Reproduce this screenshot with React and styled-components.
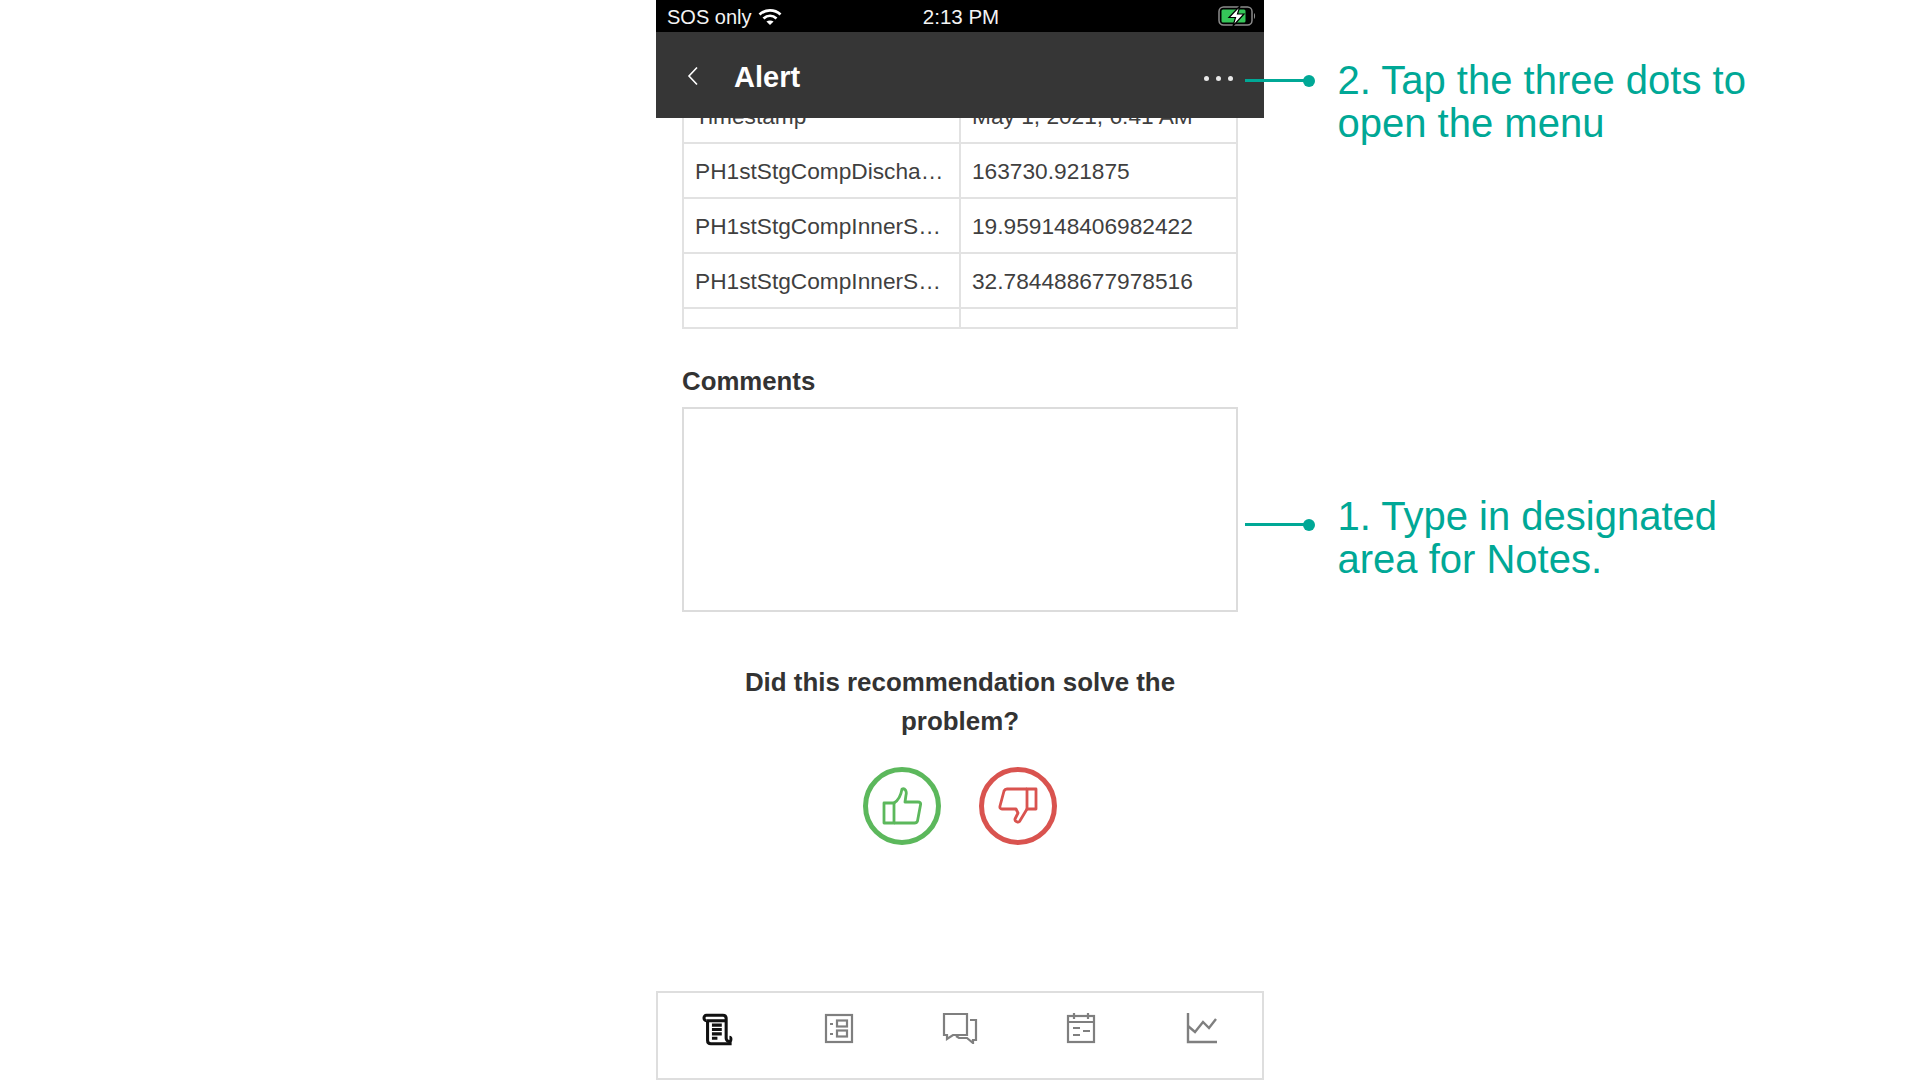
import React from "react";
import styled, { createGlobalStyle } from "styled-components";

const Global = createGlobalStyle`
  html, body { margin: 0; padding: 0; background: #fff; }
  body { font-family: "Liberation Sans", Arial, sans-serif; color: #333; }
  * { box-sizing: border-box; }
`;

const Page = styled.div`
  position: relative;
  width: 1920px;
  height: 1080px;
  overflow: hidden;
  display: flex;
  justify-content: center;
`;
const Phone = styled.div`
  width: 608px;
  height: 1080px;
  display: flex;
  flex-direction: column;
`;
const StatusBar = styled.div`
  height: 32px;
  flex: none;
  background: #000;
  color: #f4f4f4;
  font-size: 20px;
  display: grid;
  grid-template-columns: 1fr auto 1fr;
  align-items: center;
  padding: 2px 8px 0 11px;
`;
const StatusLeft = styled.div`
  display: flex;
  align-items: center;
  gap: 7px;
`;
const StatusRight = styled.div`
  display: flex;
  justify-content: flex-end;
  margin-top: -2px;
`;
const Time = styled.div`
  font-size: 20.5px;
  margin-right: 1px;
`;
const Header = styled.header`
  height: 86px;
  flex: none;
  background: #363636;
  color: #fff;
  display: flex;
  align-items: center;
  padding: 2px 31px 0 31px;
`;
const Title = styled.h1`
  margin: 3px 0 0 35px;
  font-size: 29px;
  font-weight: 700;
  flex: 1;
`;
const Dots = styled.div`
  display: flex;
  gap: 7px;
  margin-top: 4px;
`;
const Dot = styled.span`
  width: 5px;
  height: 5px;
  border-radius: 50%;
  background: #e8e8e8;
`;
const Content = styled.main`
  flex: 1;
  min-height: 0;
  overflow: hidden;
  padding: 0 26px;
  display: flex;
  flex-direction: column;
`;
const Table = styled.table`
  margin-top: -31px;
  width: 556px;
  flex: none;
  table-layout: fixed;
  border-collapse: collapse;
  border: 2px solid #e2e2e2;
  font-size: 22.7px;
`;
const Cell = styled.td`
  height: ${(props) => (props.$short ? "20px" : "55px")};
  border: 2px solid #e2e2e2;
  padding: ${(props) => (props.$short ? "0 0 0 11px" : "2px 0 0 11px")};
  white-space: nowrap;
  overflow: hidden;
  color: #3f3f3f;
`;
const Label = styled.div`
  margin-top: 37px;
  font-size: 25.8px;
  line-height: 30px;
  font-weight: 700;
  color: #333;
`;
const CommentBox = styled.div`
  margin-top: 11px;
  height: 205px;
  flex: none;
  border: 2px solid #dcdcdc;
`;
const Question = styled.div`
  margin: 51px auto 0;
  max-width: 480px;
  text-align: center;
  font-size: 25.9px;
  line-height: 39px;
  font-weight: 700;
  color: #333;
`;
const Votes = styled.div`
  margin-top: 26px;
  display: flex;
  justify-content: center;
  gap: 38px;
`;
const Vote = styled.div`
  width: 78px;
  height: 78px;
  border-radius: 50%;
  border: 5px solid ${(props) => props.$color};
  color: ${(props) => props.$color};
  display: flex;
  align-items: center;
  justify-content: center;
`;
const Nav = styled.nav`
  height: 89px;
  flex: none;
  border: 2px solid #dedede;
  display: grid;
  grid-template-columns: repeat(5, 121px);
  justify-content: center;
  padding-top: 19px;
`;
const NavItem = styled.div`
  display: flex;
  justify-content: center;
  color: ${(props) => (props.$active ? "#111" : "#7f7f7f")};
`;
const Callout = styled.div`
  position: absolute;
  left: 1245px;
  top: ${(props) => props.$top}px;
  display: flex;
  align-items: flex-start;
`;
const Leader = styled.div`
  width: 66px;
  height: 3px;
  margin-top: ${(props) => props.$offset}px;
  background: #00a896;
  position: relative;
  &::after {
    content: "";
    position: absolute;
    right: -4px;
    top: -4.5px;
    width: 12px;
    height: 12px;
    border-radius: 50%;
    background: #00a896;
  }
`;
const CalloutText = styled.div`
  margin-left: 26.5px;
  width: 440px;
  font-size: 40px;
  line-height: 43px;
  color: #00a896;
`;

const Ico = ({ children, size = 32, sw = 2.2 }) => (
  <svg width={size} height={size} viewBox="0 0 32 32" fill="none" stroke="currentColor" strokeWidth={sw}>
    {children}
  </svg>
);

const rows = [
  ["Timestamp", "May 1, 2021, 6:41 AM"],
  ["PH1stStgCompDischa…", "163730.921875"],
  ["PH1stStgCompInnerS…", "19.959148406982422"],
  ["PH1stStgCompInnerS…", "32.784488677978516"],
];

export default function App() {
  return (
    <Page>
      <Global />
      <Phone>
        <StatusBar>
          <StatusLeft>
            <span>SOS only</span>
            <svg width="24" height="18" viewBox="0 0 24 18" fill="none" stroke="#fff" strokeWidth="2.8">
              <path d="M1.5 6.5C7.5 1 16.5 1 22.5 6.5" />
              <path d="M5.5 10.5C9.5 7 14.5 7 18.5 10.5" />
              <path d="M12 17l-3.6-3.4c2.2-1.6 5-1.6 7.2 0z" fill="#fff" stroke="none" />
            </svg>
          </StatusLeft>
          <Time>2:13 PM</Time>
          <StatusRight>
            <svg width="38" height="22" viewBox="0 0 38 22" fill="none">
              <rect x="1" y="2" width="33" height="18" rx="4.500" stroke="#8c8c8c" strokeWidth="1.500" />
              <rect x="3.500" y="4.500" width="24" height="13" rx="1.500" fill="#35c759" />
              <path d="M36 8c1.400.5 1.400 5.500 0 6z" fill="#8c8c8c" />
              <path d="M22 1l-11 11.500h6.500L15 21l11-12h-6.500z" fill="#fff" stroke="#000" strokeWidth="1.200" />
            </svg>
          </StatusRight>
        </StatusBar>
        <Header>
          <svg width="12" height="20" viewBox="0 0 12 20" fill="none" stroke="#fff" strokeWidth="1.600">
            <path d="M10 1.500L2 10l8 8.500" />
          </svg>
          <Title>Alert</Title>
          <Dots>
            <Dot />
            <Dot />
            <Dot />
          </Dots>
        </Header>
        <Content>
          <Table>
            <colgroup>
              <col style={{ width: "50%" }} />
              <col style={{ width: "50%" }} />
            </colgroup>
            <tbody>
              {rows.map(([a, b], i) => (
                <tr key={i}>
                  <Cell>{a}</Cell>
                  <Cell>{b}</Cell>
                </tr>
              ))}
              <tr>
                <Cell $short />
                <Cell $short />
              </tr>
            </tbody>
          </Table>
          <Label>Comments</Label>
          <CommentBox />
          <Question>Did this recommendation solve the problem?</Question>
          <Votes>
            <Vote $color="#5cb85c">
              <svg width="40" height="40" viewBox="0 0 40 40" fill="none" stroke="currentColor" strokeWidth="2.800" strokeLinejoin="round">
                <path d="M2 17h10v20H2z" />
                <path d="M12 17c5-3 7-8 8-14 3-1 5 2 4 6l-1 7h13c2 0 3 1 2.500 3l-3 16c-.5 1.500-1.500 2-3 2H12" />
              </svg>
            </Vote>
            <Vote $color="#d9534f">
              <svg width="40" height="40" viewBox="0 0 40 40" fill="none" stroke="currentColor" strokeWidth="2.800" strokeLinejoin="round">
                <path d="M38 3H29v20h9z" />
                <path d="M29 3H9C7.500 3 6.500 4 6 5L2 20c-.5 2 .5 3 2 3h14l2 4-3 6c-.5 2 2.500 4 4.500 2.500L29 23" />
              </svg>
            </Vote>
          </Votes>
        </Content>
        <Nav>
          <NavItem $active>
            <Ico sw={2.800} size={35}>
              <path d="M6 8V26c0 2 1 3 3 3h19" />
              <path d="M5 8c-3 0-3-5 0-5h15c2 0 3 1 3 3v18c0 2 1.500 3 3 3 1.500 0 2-4 0-4" />
              <path d="M5 8h18" />
              <path d="M10 12h9M10 16h9M10 20h9M10 24h5" />
            </Ico>
          </NavItem>
          <NavItem>
            <Ico>
              <rect x="3" y="3" width="26" height="27" />
              <path d="M7 12h3M7 22h3" />
              <rect x="14" y="8.500" width="10" height="6" />
              <rect x="14" y="18.500" width="10" height="6" />
            </Ico>
          </NavItem>
          <NavItem>
            <svg width="36" height="32" viewBox="0 0 36 32" fill="none" stroke="currentColor" strokeWidth="2.200">
              <path d="M2 2h23v21H11l-6 4v-4H2z" />
              <path d="M28 8h6v20h-3v3l-6-5h-8l-3-2" />
            </svg>
          </NavItem>
          <NavItem>
            <Ico>
              <rect x="3" y="4" width="26" height="26" />
              <path d="M3 10h26M9 1v6M23 1v6" />
              <path d="M8 16h7M18 19h7M8 23h7" />
            </Ico>
          </NavItem>
          <NavItem>
            <Ico sw={2.400}>
              <path d="M2 1v29h29" />
              <path d="M2 14l7 6 8-10 6 6 7-9" />
            </Ico>
          </NavItem>
        </Nav>
      </Phone>
      <Callout $top={59}>
        <Leader $offset={20} />
        <CalloutText>2. Tap the three dots to open the menu</CalloutText>
      </Callout>
      <Callout $top={495}>
        <Leader $offset={28} />
        <CalloutText>1. Type in designated area for Notes.</CalloutText>
      </Callout>
    </Page>
  );
}
